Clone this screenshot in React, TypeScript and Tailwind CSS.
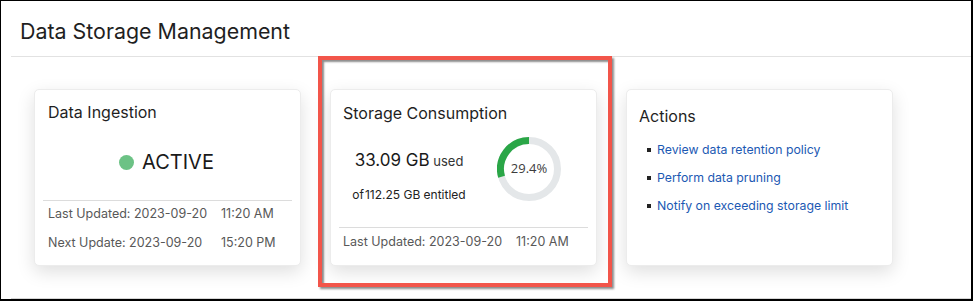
import React from "react";

function Donut() {
  return (
    <div className="relative w-[64px] h-[64px]">
      <svg width="64" height="64" viewBox="0 0 64 64">
        <circle cx="32" cy="32" r="28.5" fill="none" stroke="#e4e7e9" strokeWidth="7" />
        <path d="M32 3.5 A28.5 28.5 0 0 0 4.58 39.78" fill="none" stroke="#2aa647" strokeWidth="7" />
      </svg>
      <div className="absolute inset-0 flex items-center justify-center font-['Open_Sans',sans-serif] text-[13px] text-[#3c3c3c]">
        29.4%
      </div>
    </div>
  );
}

function FooterRow({ label, time }: { label: string; time: string }) {
  return (
    <div className="flex text-[12.5px] leading-[16px] text-[#585858]">
      <span className="w-[173px]">{label}</span>
      <span>{time}</span>
    </div>
  );
}

export default function App() {
  return (
    <div className="relative w-[973px] h-[301px] bg-white border-t border-l border-r-2 border-b-2 border-black font-['Inter',sans-serif] overflow-hidden">
      <div className="ml-[10px] flex flex-col">
        <div className="pl-[9px] pt-[17px] pb-[12px] border-b border-[#e2e2e2]">
          <h1 className="text-[21.4px] leading-[26px] text-[#1f1f1f]">Data Storage Management</h1>
        </div>
        <div className="flex gap-[29px] pl-[23px] pt-[32px] pb-[32px] border-b border-[#d6d6d6]">
          {/* Card 1 */}
          <div className="w-[267px] h-[177px] bg-white rounded-[5px] border border-[#ececec] shadow-[0_6px_18px_rgba(0,0,0,0.13)] flex flex-col">
            <div className="pl-[13px] mt-[12px] text-[16px] leading-[20px] text-[#1f1f1f]">Data Ingestion</div>
            <div className="mt-[28px] flex items-center justify-center gap-[8px] h-[24px] pr-[2px]">
              <span className="w-[15px] h-[15px] rounded-full bg-[#6cc285]" />
              <span className="text-[20px] leading-[24px] text-[#1a1a1a]">ACTIVE</span>
            </div>
            <div className="mx-[8px] mt-[26px] border-t border-[#dcdcdc]" />
            <div className="pl-[13px] mt-[5px]">
              <FooterRow label="Last Updated: 2023-09-20" time="11:20 AM" />
            </div>
            <div className="pl-[13px] mt-[13px]">
              <FooterRow label="Next Update: 2023-09-20" time="15:20 PM" />
            </div>
          </div>

          {/* Card 2 */}
          <div className="w-[267px] h-[177px] bg-white rounded-[5px] border border-[#ececec] shadow-[0_6px_18px_rgba(0,0,0,0.13)] flex flex-col">
            <div className="pl-[12px] mt-[13px] text-[16px] leading-[20px] text-[#1f1f1f]">Storage Consumption</div>
            <div className="mt-[14px] flex items-start pl-[12px]">
              <div className="w-[132px] text-center pt-[12px]">
                <div className="leading-[22px] text-[#1a1a1a]">
                  <span className="text-[17px]">33.09 GB</span>
                  <span className="text-[13px] text-[#333333]"> used</span>
                </div>
                <div className="mt-[15px] text-[12px] leading-[16px] text-[#222222]">
                  of<span className="ml-[1px]">112.25 GB entitled</span>
                </div>
              </div>
              <div className="ml-[22px]">
                <Donut />
              </div>
            </div>
            <div className="mx-[8px] mt-[24px] border-t border-[#dcdcdc]" />
            <div className="pl-[12px] mt-[6px]">
              <FooterRow label="Last Updated: 2023-09-20" time="11:20 AM" />
            </div>
          </div>

          {/* Card 3 */}
          <div className="w-[267px] h-[177px] bg-white rounded-[5px] border border-[#ececec] shadow-[0_6px_18px_rgba(0,0,0,0.13)] flex flex-col">
            <div className="pl-[12px] mt-[16px] text-[16px] leading-[20px] text-[#1f1f1f]">Actions</div>
            <ul className="mt-[15px] pl-[20px] flex flex-col gap-[10px]">
              {[
                "Review data retention policy",
                "Perform data pruning",
                "Notify on exceeding storage limit",
              ].map((t) => (
                <li key={t} className="flex items-center gap-[6px] text-[12.3px] leading-[18px]">
                  <span className="w-[4px] h-[4px] bg-[#222222]" />
                  <a className="text-[#1c59b3] cursor-pointer">{t}</a>
                </li>
              ))}
            </ul>
          </div>
        </div>
      </div>

      {/* annotation highlight */}
      <div className="absolute left-[317px] top-[55px] w-[294px] h-[231px] border-[4px] border-[#f2554a] shadow-[2px_2px_2px_rgba(0,0,0,0.45),inset_2px_2px_2px_rgba(0,0,0,0.45)] pointer-events-none" />
    </div>
  );
}
